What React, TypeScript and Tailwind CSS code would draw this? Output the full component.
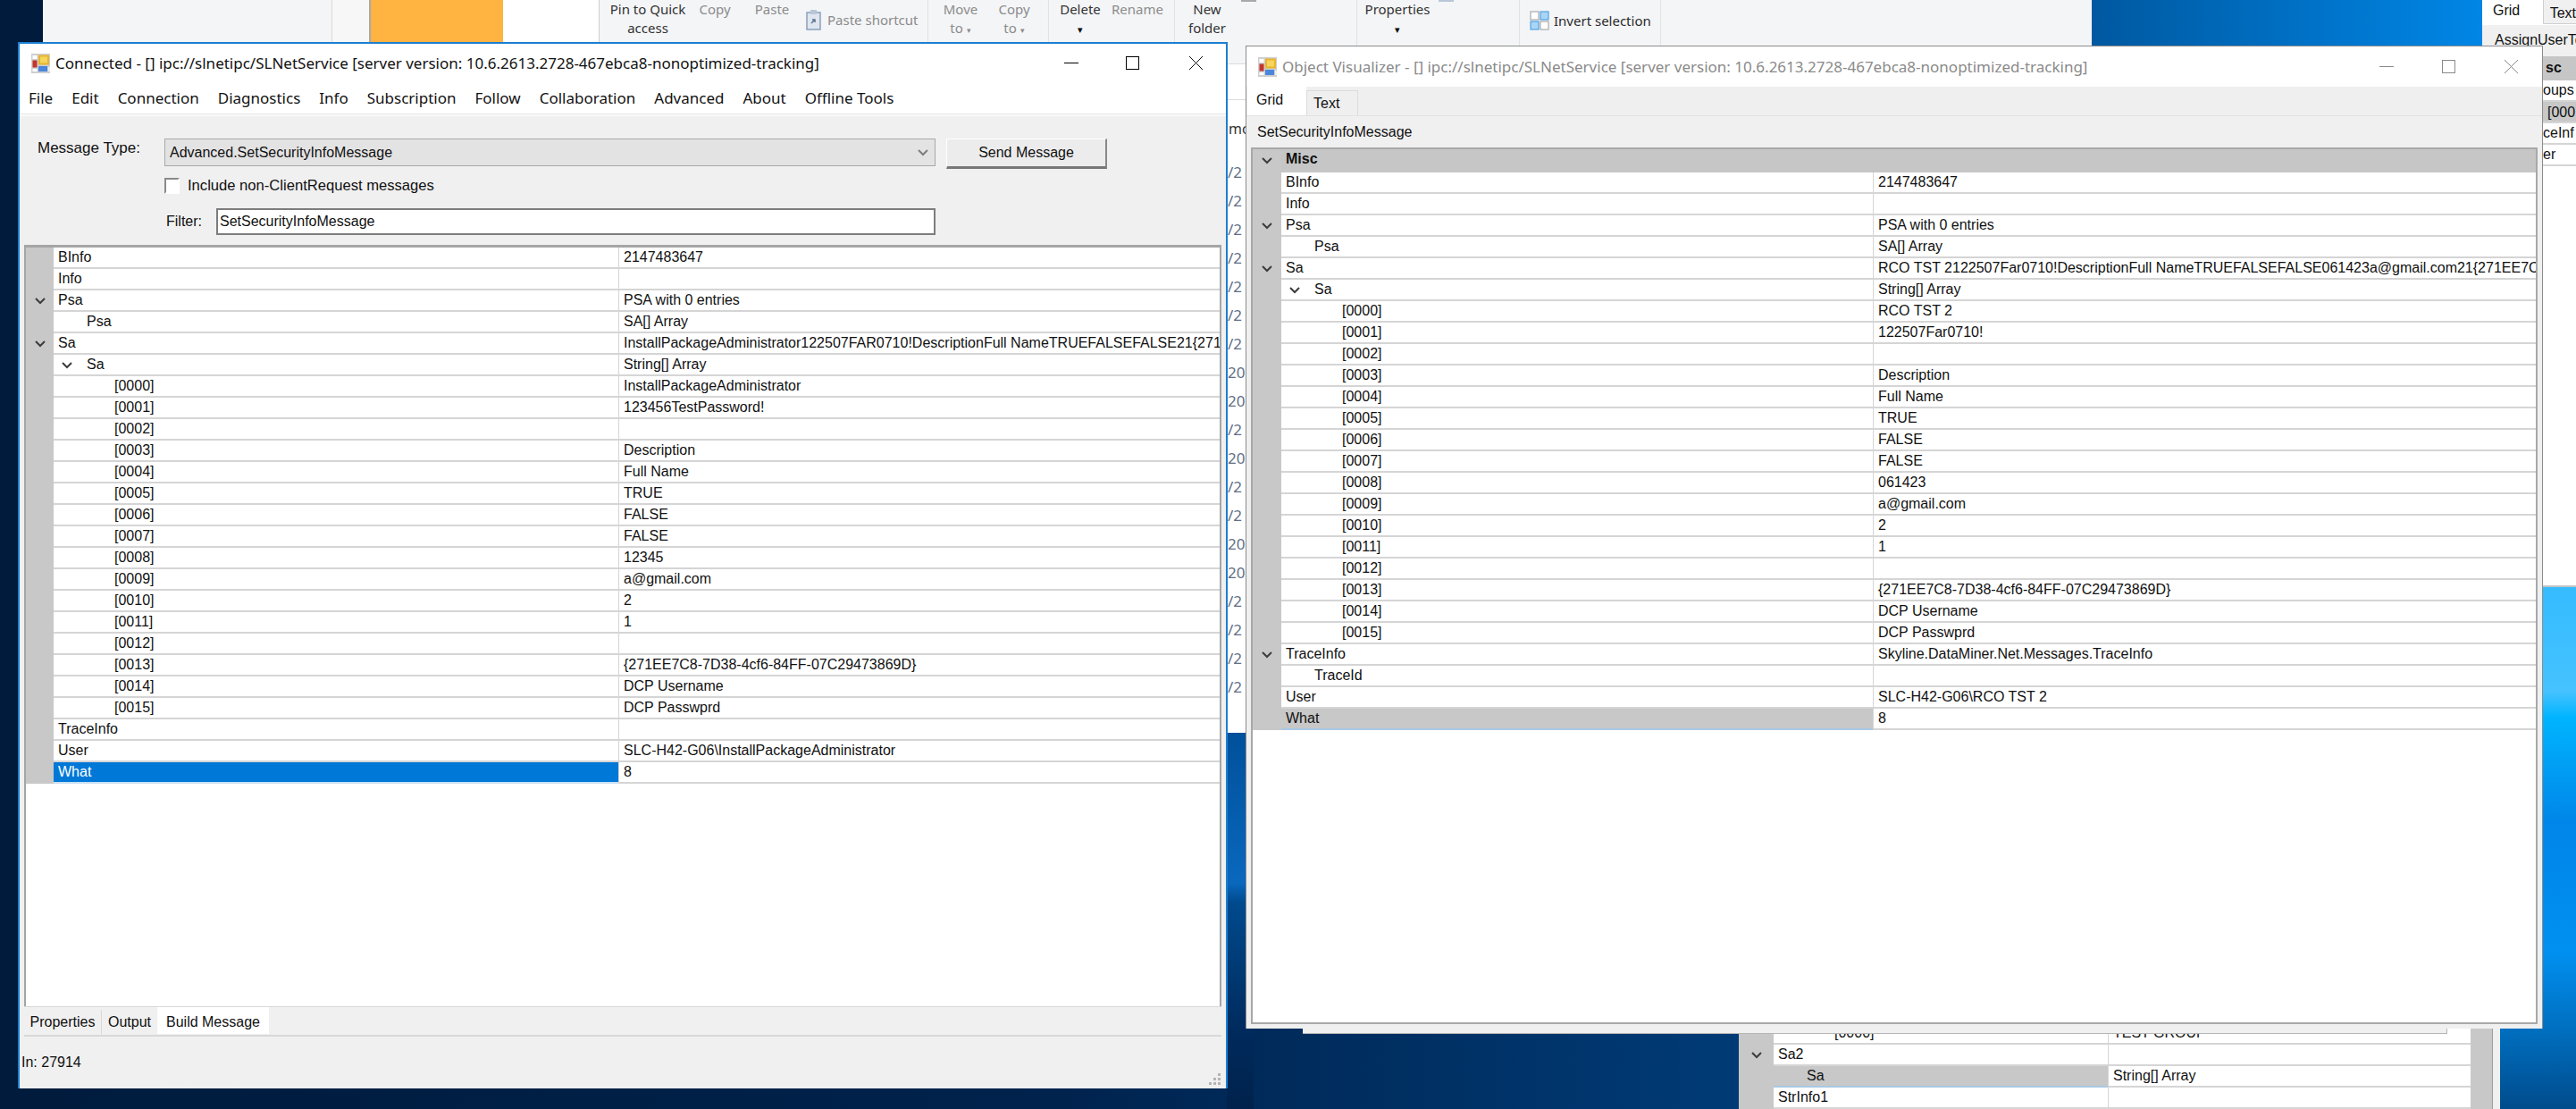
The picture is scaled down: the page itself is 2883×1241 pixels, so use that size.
import type { ReactNode } from "react"

type Row = {
  name: string
  value?: string
  indent?: 0 | 1 | 2
  gutter?: boolean
  inline?: boolean
  state?: "selected" | "muted" | "group"
}

const saStrings = (pairs: string[]): Row[] =>
  pairs.map((value, i) => ({
    name: `[${String(i).padStart(4, "0")}]`,
    value,
    indent: 2,
  }))

const leftRows: Row[] = [
  { name: "BInfo", value: "2147483647" },
  { name: "Info" },
  { name: "Psa", value: "PSA with 0 entries", gutter: true },
  { name: "Psa", value: "SA[] Array", indent: 1 },
  {
    name: "Sa",
    value:
      "InstallPackageAdministrator122507FAR0710!DescriptionFull NameTRUEFALSEFALSE21{271EE7C8-7D38-4cf6-84FF-07C29473869D}",
    gutter: true,
  },
  { name: "Sa", value: "String[] Array", indent: 1, inline: true },
  ...saStrings([
    "InstallPackageAdministrator",
    "123456TestPassword!",
    "",
    "Description",
    "Full Name",
    "TRUE",
    "FALSE",
    "FALSE",
    "12345",
    "a@gmail.com",
    "2",
    "1",
    "",
    "{271EE7C8-7D38-4cf6-84FF-07C29473869D}",
    "DCP Username",
    "DCP Passwprd",
  ]),
  { name: "TraceInfo" },
  { name: "User", value: "SLC-H42-G06\\InstallPackageAdministrator" },
  { name: "What", value: "8", state: "selected" },
]

const rightRows: Row[] = [
  { name: "Misc", gutter: true, state: "group" },
  { name: "BInfo", value: "2147483647" },
  { name: "Info" },
  { name: "Psa", value: "PSA with 0 entries", gutter: true },
  { name: "Psa", value: "SA[] Array", indent: 1 },
  {
    name: "Sa",
    value:
      "RCO TST 2122507Far0710!DescriptionFull NameTRUEFALSEFALSE061423a@gmail.com21{271EE7C8-7D38-4cf6-84FF-07C29473869D}",
    gutter: true,
  },
  { name: "Sa", value: "String[] Array", indent: 1, inline: true },
  ...saStrings([
    "RCO TST 2",
    "122507Far0710!",
    "",
    "Description",
    "Full Name",
    "TRUE",
    "FALSE",
    "FALSE",
    "061423",
    "a@gmail.com",
    "2",
    "1",
    "",
    "{271EE7C8-7D38-4cf6-84FF-07C29473869D}",
    "DCP Username",
    "DCP Passwprd",
  ]),
  { name: "TraceInfo", value: "Skyline.DataMiner.Net.Messages.TraceInfo", gutter: true },
  { name: "TraceId", indent: 1 },
  { name: "User", value: "SLC-H42-G06\\RCO TST 2" },
  { name: "What", value: "8", state: "muted" },
]

const behindRows: Row[] = [
  { name: "[0000]", value: "TEST GROUP", indent: 2 },
  { name: "Sa2", gutter: true },
  { name: "Sa", value: "String[] Array", indent: 1, state: "muted" },
  { name: "StrInfo1" },
]

const menu = [
  "File",
  "Edit",
  "Connection",
  "Diagnostics",
  "Info",
  "Subscription",
  "Follow",
  "Collaboration",
  "Advanced",
  "About",
  "Offline Tools",
]

const explorerDates = [
  "/2", "/2", "/2", "/2", "/2", "/2", "/2", "20", "20", "/2",
  "20", "/2", "/2", "20", "20", "/2", "/2", "/2", "/2",
]

function Chevron({ className = "" }: { className?: string }) {
  return (
    <svg width="12" height="8" viewBox="0 0 12 8" className={className}>
      <path d="M1 1l5 5 5-5" fill="none" stroke="#3c3c3c" strokeWidth="2" />
    </svg>
  )
}

function AppIcon() {
  return (
    <svg width="21" height="22" viewBox="0 0 21 22" className="shrink-0">
      <rect width="21" height="22" fill="#cfcfcf" />
      <rect x="1.5" y="2" width="5" height="4" fill="#fff" />
      <rect x="8" y="1.5" width="12" height="11" fill="#e8b52e" />
      <rect x="10" y="3.5" width="8" height="7" fill="#f6d45e" />
      <rect x="1.5" y="7.5" width="5" height="8" fill="#c3362e" />
      <rect x="8" y="14" width="10" height="6" fill="#4a86dc" />
      <rect x="1.5" y="17" width="5" height="3" fill="#fff" />
      <rect x="19" y="15" width="2" height="5" fill="#eee" />
    </svg>
  )
}

function PropGrid({
  rows,
  gutter,
  nameWidth,
}: {
  rows: Row[]
  gutter: number
  nameWidth: number
}) {
  return (
    <div className="font-['Liberation_Sans',sans-serif] text-[16px] leading-[22px] text-[#111]">
      {rows.map((row, i) => {
        const group = row.state === "group"
        return (
          <div key={i} className={`flex ${group ? "h-[26px] bg-[#c6c6c6]" : "h-[24px]"}`}>
            <div
              style={{ width: gutter }}
              className="flex shrink-0 items-center justify-center bg-[#c8c8c8]"
            >
              {row.gutter && <Chevron />}
            </div>
            <div
              style={{ width: nameWidth }}
              className={`relative shrink-0 overflow-hidden whitespace-nowrap pl-[5px] ${
                group
                  ? "font-bold"
                  : row.state === "selected"
                    ? "border-b-2 border-[#c9dff2] bg-[#0078d7] text-white"
                    : row.state === "muted"
                      ? "border-b-2 border-[#a9c8e4] bg-[#c8c8c8]"
                      : "border-b-2 border-[#d5d5d5] bg-white"
              }`}
            >
              {row.inline && <Chevron className="absolute left-[9px] top-[8px]" />}
              <span className={row.indent === 2 ? "ml-[63px]" : row.indent === 1 ? "ml-[32px]" : ""}>
                {row.name}
              </span>
            </div>
            {!group && (
              <div className="min-w-0 flex-1 overflow-hidden whitespace-nowrap border-b-2 border-l border-[#d5d5d5] bg-white pl-[5px]">
                {row.value}
              </div>
            )}
          </div>
        )
      })}
    </div>
  )
}

function RibbonText({ children, className = "" }: { children: ReactNode; className?: string }) {
  return (
    <div className={`shrink-0 text-center leading-[21px] ${className}`}>{children}</div>
  )
}

function Explorer() {
  return (
    <div className="absolute left-[48px] top-0 flex h-[51px] w-[2293px] bg-[#f4f5f7] font-['Noto_Sans',sans-serif] text-[15px] text-[#2b2b2b]">
      <div className="w-[324px] border-r border-[#d9d9d9]" />
      <div className="w-[43px] border-r-2 border-[#a9a9a9] bg-[#f7f7f7]" />
      <div className="w-[148px] bg-[#ffb340]" />
      <div className="w-[108px] border-r border-[#cfcfcf] bg-white" />
      <div className="flex w-[368px] border-r border-[#e2e2e2] text-[#8c8c8c]">
        <RibbonText className="ml-[11px] w-[86px] text-[#333]">
          Pin to Quick
          <br />
          access
        </RibbonText>
        <RibbonText className="ml-[12px] w-[40px]">Copy</RibbonText>
        <RibbonText className="ml-[24px] w-[40px]">Paste</RibbonText>
        <div className="ml-[18px] flex h-[44px] items-center gap-[7px]">
          <svg width="17" height="24" viewBox="0 0 17 24">
            <path d="M1 4h15v19H1z" fill="#dfe6ef" stroke="#8aa0bd" strokeWidth="1.5" />
            <path d="M5 1h7v5H5z" fill="#b9c6d8" />
            <path d="M6 16l4-4m-3 0h3v3" fill="none" stroke="#5d7391" strokeWidth="1.5" />
          </svg>
          <span>Paste shortcut</span>
        </div>
      </div>
      <div className="flex w-[135px] border-r border-[#e2e2e2] text-[#8c8c8c]">
        <RibbonText className="ml-[13px] w-[46px]">
          Move
          <br />
          to <span className="text-[9px]">▾</span>
        </RibbonText>
        <RibbonText className="ml-[16px] w-[42px]">
          Copy
          <br />
          to <span className="text-[9px]">▾</span>
        </RibbonText>
      </div>
      <div className="flex w-[141px] border-r border-[#e2e2e2]">
        <RibbonText className="ml-[12px] w-[46px] text-[#333]">
          Delete
          <br />
          <span className="text-[11px] text-black">▾</span>
        </RibbonText>
        <RibbonText className="ml-[12px] w-[56px] text-[#8c8c8c]">Rename</RibbonText>
      </div>
      <div className="relative flex w-[204px] border-r border-[#e2e2e2]">
        <RibbonText className="ml-[12px] w-[48px] text-[#333]">
          New
          <br />
          folder
        </RibbonText>
        <div className="absolute left-[74px] top-0 h-[2px] w-[17px] bg-[#a9a9a9]" />
      </div>
      <div className="relative flex w-[182px] border-r border-[#e2e2e2]">
        <RibbonText className="ml-[8px] w-[74px] text-[#333]">
          Properties
          <br />
          <span className="text-[11px] text-black">▾</span>
        </RibbonText>
        <div className="absolute left-[91px] top-0 h-[2px] w-[17px] bg-[#b9c6d8]" />
      </div>
      <div className="flex w-[158px] items-center gap-[5px] border-r border-[#e2e2e2] pb-[5px] pl-[11px]">
        <svg width="22" height="22" viewBox="0 0 22 22">
          <rect x="1" y="1" width="9" height="9" fill="#fff" stroke="#9a9a9a" />
          <rect x="12" y="1" width="9" height="9" fill="#a9d5f7" stroke="#3a96dd" />
          <rect x="1" y="12" width="9" height="9" fill="#a9d5f7" stroke="#3a96dd" />
          <rect x="12" y="12" width="9" height="9" fill="#fff" stroke="#9a9a9a" />
        </svg>
        <span>Invert selection</span>
      </div>
      <div className="flex-1" />
    </div>
  )
}

function ExplorerStrip() {
  return (
    <div className="absolute left-[1373px] top-[47px] h-[773px] w-[30px] bg-white font-['Noto_Sans',sans-serif] text-[17px] text-[#5f6f86]">
      <div className="h-[25px] border-b border-[#dcdcdc] bg-[#f4f5f7]" />
      <div className="h-[40px] border-b border-[#dcdcdc]" />
      <div className="mt-[24px] h-[17px] overflow-hidden whitespace-nowrap pl-[2px] text-[16px] leading-[17px] text-[#333]">mo</div>
      <div className="h-[22px]" />
      {explorerDates.map((d, i) => (
        <div key={i} className="h-[32px] pt-[8px] pl-[1px] leading-[20px]">
          {d}
        </div>
      ))}
    </div>
  )
}

function BehindRight() {
  return (
    <div className="absolute left-[2778px] top-0 h-[657px] w-[105px] border-b-2 border-[#c4c4c4] bg-white font-['Liberation_Sans',sans-serif] text-[16px] leading-[22px] text-[#111]">
      <div className="flex h-[28px]">
        <div className="w-[68px] pl-[12px] pt-[1px]">Grid</div>
        <div className="h-[27px] flex-1 border-b border-l border-[#cfcfcf] bg-[#f0f0f0] pl-[7px] pt-[4px]">Text</div>
      </div>
      <div className="h-[35px] overflow-hidden whitespace-nowrap bg-[#f0f0f0] pl-[14px] pt-[6px]">AssignUserTo</div>
      <div className="h-[27px] bg-[#c6c6c6] pl-[71px] pt-[2px] font-bold">sc</div>
      <div className="h-[24px] border-b-2 border-[#d5d5d5] pl-[68px]">oups</div>
      <div className="h-[24px] border-b-2 border-[#d5d5d5] bg-[#c8c8c8] pl-[73px] pt-[1px]">[000</div>
      <div className="h-[24px] border-b-2 border-[#d5d5d5] pl-[68px]">ceInf</div>
      <div className="h-[24px] border-b-2 border-[#d5d5d5] pl-[68px]">er</div>
    </div>
  )
}

function BehindBottom() {
  return (
    <div className="absolute left-[1946px] top-[1145px] flex h-[96px] w-[852px] overflow-hidden">
      <div className="w-[819px]">
        <PropGrid rows={behindRows} gutter={39} nameWidth={374} />
      </div>
      <div className="w-[24px] bg-[#c8c8c8]" />
      <div className="w-[9px] border-l border-[#9c9c9c] bg-[#f0f0f0]" />
    </div>
  )
}

function LeftWindow() {
  return (
    <div className="absolute left-[20px] top-[47px] flex h-[1171px] w-[1354px] flex-col border-x-2 border-t-2 border-[#1c7fd1] bg-white font-['Noto_Sans',sans-serif] text-[17px] text-[#111]">
      <div className="flex h-[43px] shrink-0 items-center pl-[13px]">
        <AppIcon />
        <span className="ml-[6px] whitespace-nowrap">
          Connected - [] ipc://slnetipc/SLNetService [server version: 10.6.2613.2728-467ebca8-nonoptimized-tracking]
        </span>
        <div className="ml-auto flex items-center">
          <div className="h-[1px] w-[16px] bg-black" />
          <div className="ml-[53px] h-[15px] w-[15px] border border-black" />
          <svg width="17" height="17" viewBox="0 0 17 17" className="ml-[55px] mr-[25px]">
            <path d="M1 1l15 15M16 1L1 16" stroke="#111" strokeWidth="1" />
          </svg>
        </div>
      </div>
      <div className="flex h-[35px] shrink-0 items-center gap-[21px] pl-[10px]">
        {menu.map((m) => (
          <span key={m}>{m}</span>
        ))}
      </div>
      <div className="h-[3px] shrink-0 border-t border-[#e6e6e6] bg-[#fafafa]" />
      <div className="flex min-h-0 flex-1 flex-col bg-[#f0f0f0] px-[5px] text-[16px]">
        <div className="flex h-[144px] shrink-0 flex-col font-['Liberation_Sans',sans-serif]">
          <div className="mt-[25px] flex items-start">
            <span className="ml-[15px] w-[142px] text-[17px] leading-[22px]">Message Type:</span>
            <div className="flex h-[31px] w-[863px] items-center justify-between border border-[#a8a8a8] bg-[#e3e3e3] pl-[5px] pr-[7px]">
              Advanced.SetSecurityInfoMessage
              <Chevron className="opacity-60" />
            </div>
            <button className="ml-[12px] h-[34px] w-[180px] border-b-[3px] border-l border-r-2 border-t border-b-[#777] border-l-white border-r-[#888] border-t-white bg-[#ececec]">
              Send Message
            </button>
          </div>
          <div className="ml-[157px] mt-[10px] flex h-[18px] items-center gap-[9px]">
            <div className="h-[18px] w-[17px] border-2 border-b-white border-l-[#8a8a8a] border-r-white border-t-[#8a8a8a] bg-white" />
            <span className="text-[16.6px]">Include non-ClientRequest messages</span>
          </div>
          <div className="mt-[16px] flex items-center">
            <span className="ml-[159px] w-[56px]">Filter:</span>
            <div className="flex h-[30px] w-[805px] items-center border-2 border-[#7d7d7d] bg-white pl-[2px]">
              SetSecurityInfoMessage
            </div>
          </div>
        </div>
        <div className="min-h-0 flex-1 border-x-2 border-t-[3px] border-[#a5a5a5] bg-white">
          <PropGrid rows={leftRows} gutter={31} nameWidth={632} />
        </div>
        <div className="flex h-[34px] shrink-0 items-start border-b-2 border-t border-[#d8d8d8] font-['Liberation_Sans',sans-serif]">
          <div className="mt-[3px] flex h-[27px] w-[87px] items-center justify-center border-r border-[#d8d8d8]">Properties</div>
          <div className="mt-[3px] flex h-[27px] w-[62px] items-center justify-center">Output</div>
          <div className="flex h-[30px] w-[125px] items-center justify-center bg-white pt-[4px]">Build Message</div>
        </div>
        <div className="flex h-[58px] shrink-0 items-center pb-[1px] font-['Liberation_Sans',sans-serif]">
          <span className="ml-[-3px]">In: 27914</span>
          <svg width="14" height="14" viewBox="0 0 14 14" className="ml-auto mt-[38px]" fill="#b5b5b5">
            <rect x="10" y="0" width="3" height="3" />
            <rect x="5" y="5" width="3" height="3" />
            <rect x="10" y="5" width="3" height="3" />
            <rect x="0" y="10" width="3" height="3" />
            <rect x="5" y="10" width="3" height="3" />
            <rect x="10" y="10" width="3" height="3" />
          </svg>
        </div>
      </div>
    </div>
  )
}

function RightWindow() {
  return (
    <div className="absolute left-[1394px] top-[51px] flex h-[1100px] w-[1452px] flex-col border-x border-t border-[#8c8c8c] bg-white font-['Liberation_Sans',sans-serif] text-[16px] text-[#111]">
      <div className="flex h-[45px] shrink-0 items-center pl-[13px] font-['Noto_Sans',sans-serif] text-[17px] text-[#8a8a8a]">
        <AppIcon />
        <span className="ml-[6px] whitespace-nowrap">
          Object Visualizer - [] ipc://slnetipc/SLNetService [server version: 10.6.2613.2728-467ebca8-nonoptimized-tracking]
        </span>
        <div className="ml-auto flex items-center">
          <div className="h-[1px] w-[16px] bg-[#8a8a8a]" />
          <div className="ml-[54px] h-[15px] w-[15px] border border-[#8a8a8a]" />
          <svg width="17" height="17" viewBox="0 0 17 17" className="ml-[54px] mr-[26px]">
            <path d="M1 1l15 15M16 1L1 16" stroke="#8a8a8a" strokeWidth="1" />
          </svg>
        </div>
      </div>
      <div className="flex h-[32px] shrink-0 items-end bg-[#efefef]">
        <div className="ml-[1px] flex h-[32px] w-[66px] items-center bg-white pb-[2px] pl-[10px]">Grid</div>
        <div className="flex h-[28px] w-[58px] items-center border-x border-t border-[#dcdcdc] pl-[7px]">Text</div>
      </div>
      <div className="flex min-h-0 flex-1 flex-col border-t border-[#e2e2e2] bg-[#f0f0f0] px-[5px] pb-[5px]">
        <div className="flex h-[35px] shrink-0 items-center pl-[7px]">SetSecurityInfoMessage</div>
        <div className="min-h-0 flex-1 border-2 border-[#a8a8a8] bg-white">
          <PropGrid rows={rightRows} gutter={32} nameWidth={662} />
        </div>
      </div>
    </div>
  )
}

export default function App() {
  return (
    <div className="relative h-[1241px] w-[2883px] overflow-hidden bg-[linear-gradient(90deg,#001b3c_0%,#00224c_40%,#003d7a_70%,#004a8a_100%)]">
      <Explorer />
      <ExplorerStrip />
      <div className="absolute left-[1373px] top-[820px] h-[421px] w-[30px] bg-[linear-gradient(180deg,#00509b_0%,#0a68bd_40%,#004a8e_45%,#002a5c_80%,#00224c_100%)]" />
      <div className="absolute left-[2341px] top-0 h-[51px] w-[437px] bg-[linear-gradient(90deg,#0058a0_0%,#0086e6_100%)]" />
      <div className="absolute left-[2798px] top-[657px] h-[584px] w-[85px] bg-[linear-gradient(180deg,#35bcff_0%,#45c2ff_20%,#00b4ff_25%,#0086e8_45%,#0090f0_70%,#004c8c_100%)]" />
      <BehindRight />
      <BehindBottom />
      <div className="absolute left-[1458px] top-[1140px] h-[17px] w-[1281px] border-b border-r border-[#b5b5b5] bg-[#f0f0f0]" />
      <LeftWindow />
      <RightWindow />
    </div>
  )
}
